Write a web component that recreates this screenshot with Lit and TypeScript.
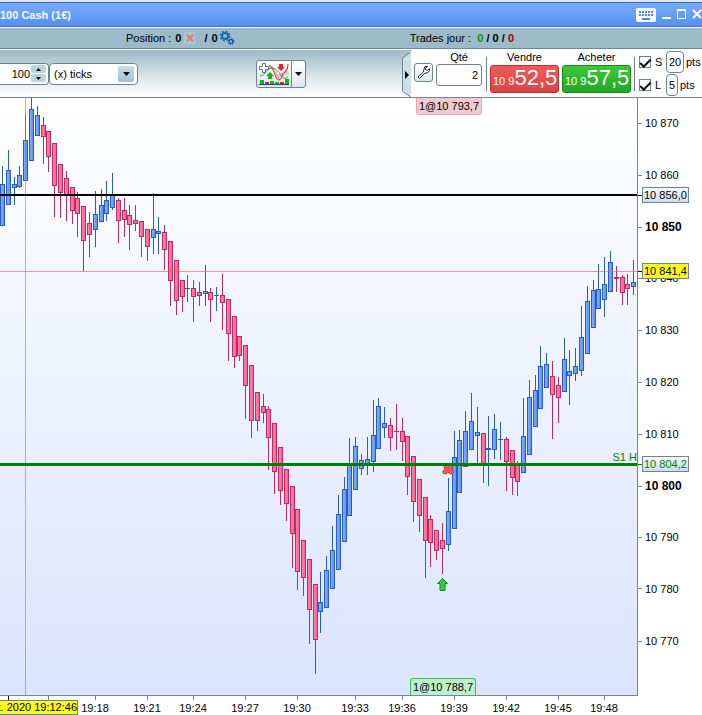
import { LitElement, html, svg, css } from "lit";
import { customElement } from "lit/decorators.js";

// Plot drawing space; it stretches with the window.
const PLOT_W = 637;
const PLOT_H = 597;
const PLOT_TOP = 98;

type Candle = [x: number, high: number, top: number, bottom: number, low: number, kind: "u" | "d"];

const CANDLES: Candle[] = [
  [2, 166, 184, 226, 226, "u"], [8, 150, 170, 205, 205, "u"], [14, 177, 184, 188, 205, "u"],
  [19, 166, 175, 187, 188, "u"], [25, 114, 140, 181, 181, "u"], [31, 98, 109, 161, 161, "u"],
  [37, 106, 115, 136, 136, "u"], [43, 117, 125, 137, 164, "d"], [48, 131, 131, 157, 172, "d"],
  [54, 143, 143, 186, 217, "d"], [60, 164, 164, 193, 218, "d"], [66, 171, 178, 196, 221, "d"],
  [72, 187, 187, 211, 224, "d"], [77, 192, 198, 214, 237, "d"], [83, 206, 206, 241, 271, "d"],
  [89, 212, 223, 235, 257, "d"], [95, 191, 214, 230, 247, "u"], [101, 189, 205, 222, 222, "u"],
  [106, 181, 200, 214, 221, "u"], [112, 173, 195, 208, 210, "u"], [118, 198, 200, 221, 243, "d"],
  [124, 198, 210, 220, 237, "d"], [129, 205, 215, 225, 250, "d"], [135, 205, 220, 224, 231, "d"],
  [141, 221, 221, 237, 257, "d"], [147, 229, 229, 247, 261, "d"], [153, 193, 229, 238, 254, "u"],
  [158, 217, 231, 234, 254, "u"], [164, 225, 232, 250, 270, "d"], [170, 241, 241, 281, 306, "d"],
  [176, 260, 260, 301, 315, "d"], [182, 280, 280, 297, 312, "d"], [187, 275, 288, 289, 302, "d"],
  [193, 280, 288, 297, 322, "d"], [199, 282, 292, 296, 306, "d"], [205, 265, 291, 294, 306, "u"],
  [210, 288, 292, 300, 322, "d"], [216, 287, 295, 296, 311, "u"], [222, 274, 295, 303, 330, "d"],
  [228, 299, 299, 334, 361, "d"], [234, 316, 316, 357, 368, "d"], [239, 336, 336, 356, 361, "d"],
  [245, 345, 345, 386, 419, "d"], [251, 365, 365, 421, 438, "d"], [257, 392, 392, 421, 431, "d"],
  [263, 394, 406, 413, 423, "d"], [268, 406, 409, 438, 470, "d"], [274, 423, 423, 472, 494, "d"],
  [280, 447, 447, 491, 505, "d"], [286, 469, 469, 504, 521, "d"], [292, 486, 486, 534, 568, "d"],
  [297, 509, 509, 572, 590, "d"], [303, 540, 540, 578, 596, "d"], [309, 559, 559, 610, 644, "d"],
  [315, 584, 584, 640, 674, "d"], [320, 572, 602, 612, 633, "u"], [326, 556, 570, 608, 608, "u"],
  [332, 526, 550, 589, 589, "u"], [338, 495, 514, 570, 570, "u"], [344, 477, 489, 542, 542, "u"],
  [349, 438, 465, 516, 516, "u"], [355, 437, 446, 490, 490, "u"], [361, 454, 460, 469, 475, "u"],
  [367, 437, 459, 466, 475, "u"], [373, 400, 435, 462, 472, "u"], [378, 398, 406, 449, 449, "u"],
  [384, 407, 423, 428, 438, "u"], [390, 418, 425, 438, 451, "d"], [396, 404, 431, 432, 450, "d"],
  [402, 418, 431, 442, 461, "d"], [407, 436, 436, 477, 495, "d"], [413, 456, 456, 502, 522, "d"],
  [419, 479, 479, 516, 532, "d"], [425, 497, 497, 541, 578, "d"], [430, 515, 519, 543, 567, "d"],
  [436, 530, 530, 551, 560, "d"], [442, 523, 540, 549, 574, "d"], [448, 478, 511, 545, 551, "u"],
  [454, 431, 457, 529, 529, "u"], [459, 430, 440, 493, 493, "u"], [465, 411, 431, 467, 467, "u"],
  [471, 393, 421, 450, 450, "u"], [477, 407, 432, 436, 464, "u"], [483, 433, 433, 465, 483, "d"],
  [488, 416, 448, 450, 486, "u"], [494, 414, 429, 450, 459, "u"], [500, 422, 439, 440, 460, "u"],
  [506, 437, 439, 462, 491, "d"], [512, 450, 450, 478, 495, "d"], [517, 461, 464, 482, 496, "d"],
  [523, 398, 436, 473, 473, "u"], [529, 380, 397, 455, 455, "u"], [535, 375, 390, 427, 427, "u"],
  [540, 346, 366, 409, 409, "u"], [546, 353, 364, 388, 388, "u"], [552, 361, 376, 395, 439, "d"],
  [558, 377, 385, 398, 423, "d"], [564, 338, 359, 392, 392, "u"], [569, 350, 371, 376, 405, "u"],
  [575, 348, 366, 374, 381, "u"], [581, 306, 337, 371, 376, "u"], [587, 286, 301, 354, 354, "u"],
  [593, 280, 290, 328, 328, "u"], [598, 264, 289, 309, 309, "u"], [604, 257, 284, 300, 317, "u"],
  [610, 251, 262, 292, 292, "u"], [616, 266, 277, 279, 292, "d"], [622, 275, 277, 293, 305, "d"],
  [627, 274, 284, 289, 305, "d"], [633, 260, 282, 287, 295, "u"],
];

const PRICES = [
  { y: 123, t: "10 870" }, { y: 175, t: "10 860" }, { y: 227, t: "10 850", strong: true },
  { y: 278, t: "10 840" }, { y: 330, t: "10 830" }, { y: 382, t: "10 820" },
  { y: 434, t: "10 810" }, { y: 486, t: "10 800", strong: true }, { y: 537, t: "10 790" },
  { y: 589, t: "10 780" }, { y: 641, t: "10 770" },
];

const MARKS = [
  { y: 195, t: "10 856,0", kind: "level" },
  { y: 271, t: "10 841,4", kind: "cursor" },
  { y: 464, t: "10 804,2", kind: "level support" },
];

const TIMES = [
  { x: 48, t: "" }, { x: 95, t: "19:18" }, { x: 147, t: "19:21" }, { x: 193, t: "19:24" },
  { x: 245, t: "19:27" }, { x: 297, t: "19:30" }, { x: 355, t: "19:33" }, { x: 402, t: "19:36" },
  { x: 454, t: "19:39" }, { x: 506, t: "19:42" }, { x: 558, t: "19:45" }, { x: 604, t: "19:48" },
];

const pctY = (y: number) => `top:${((y - PLOT_TOP) / PLOT_H) * 100}%`;
const pctX = (x: number) => `left:${(x / PLOT_W) * 100}%`;

const base = css`
  :host, * { box-sizing: border-box; }
  button, input, select { font: inherit; color: inherit; margin: 0; padding: 0; }
  button { cursor: pointer; }
  svg { display: block; }
`;

@customElement("title-bar")
class TitleBar extends LitElement {
  static styles = [base, css`
    :host {
      display: flex; align-items: center; flex: none; height: 25px; overflow: hidden;
      background: linear-gradient(#77adff, #5590ee);
      border-top: 1px solid #2c63bd; border-bottom: 1px solid #3a70c6;
    }
    .title { flex: 1; margin: 0; font-size: 11px; line-height: 16px; font-weight: bold; color: #f4f8ff; white-space: nowrap; }
    .controls { display: flex; align-items: center; gap: 5px; flex: none; }
    .controls button { border: 0; background: none; width: 10px; height: 16px; }
    .controls .keys { width: 21px; }
  `];
  render() {
    return html`
      <h1 class="title">100 Cash (1€)</h1>
      <div class="controls">
        <button class="keys" aria-label="Clavier">
          <svg width="21" height="16" viewBox="0 0 21 16"><rect x="0" y="1" width="20" height="14" rx="2" fill="#fff"/>
            <path d="M3 5H18M3 8H18" stroke="#4a86e4" stroke-width="2" stroke-dasharray="2 1"/><path d="M6 12H14" stroke="#4a86e4" stroke-width="2"/></svg>
        </button>
        <button aria-label="Réduire"><svg width="10" height="16"><rect y="10" width="9" height="2" fill="#fff"/></svg></button>
        <button aria-label="Agrandir"><svg width="10" height="16"><path d="M.5 2V11.5H8.5V2M0 3H9" fill="none" stroke="#fff"/><rect y="2" width="9" height="2" fill="#fff"/></svg></button>
        <button aria-label="Fermer"><svg width="10" height="16"><path d="M1 3L9 11M9 3L1 11" stroke="#fff" stroke-width="2"/></svg></button>
      </div>`;
  }
}

@customElement("status-bar")
class StatusBar extends LitElement {
  static styles = [base, css`
    :host {
      display: flex; align-items: center; justify-content: space-between; flex: none; height: 22px;
      padding: 0 188px 0 126px; background: #9cbac7; white-space: nowrap; font-size: 11px; line-height: 16px;
      border-top: 1px solid #fff; border-bottom: 1px solid #6f8791;
    }
    .group { display: flex; align-items: center; }
    .count { margin-left: 4px; }
    .slash { margin: 0 4px 0 7px; }
    button { border: 0; background: none; }
    .win { color: #12910f; } .loss { color: #a00010; }
  `];
  render() {
    return html`
      <div class="group"><span>Position :</span><b class="count">0</b>
        <button aria-label="Fermer la position"><svg width="16" height="14" viewBox="0 0 16 14"><rect x="3.5" y="1.5" width="10" height="11" fill="#b5c5cf" stroke="#a9c6d2"/>
          <path d="M5 4l2-1 2 2 2-2 2 1-2 3 2 3-2 1-2-2-2 2-2-1 2-3z" fill="#db8189"/></svg></button>
        <b class="slash">/</b><b>0</b>
        <button aria-label="Réglages"><svg width="18" height="16" viewBox="0 0 18 16" fill="none">
          <circle cx="7" cy="6" r="3" stroke="#1769bd" stroke-width="2"/><circle cx="7" cy="6" r="4.5" stroke="#1769bd" stroke-width="2" stroke-dasharray="1.8 1.73"/>
          <circle cx="13" cy="11.500" r="1.800" stroke="#114fb4" stroke-width="1.200"/><circle cx="13" cy="11.500" r="2.800" stroke="#114fb4" stroke-width="1.300" stroke-dasharray="1.1 1.1"/></svg></button>
      </div>
      <div class="group"><span>Trades jour :&nbsp;</span><span>&nbsp;<b class="win">0</b> <b>/</b> <b>0</b> <b>/</b> <b class="loss">0</b></span></div>`;
  }
}

@customElement("tool-bar")
class ToolBar extends LitElement {
  static styles = [base, css`
    :host {
      display: flex; align-items: center; flex: none; height: 49px; overflow: hidden; font-size: 11px; line-height: 14px;
      background: linear-gradient(#9bb9c6, #dfe8ec 60%, #fff); border-top: 1px solid #fff; border-bottom: 1px solid #728890;
    }
    .field { display: flex; align-items: center; flex: none; height: 22px; background: #fff; border: 1px solid #6d848e; border-radius: 4px; }
    .period { width: 49px; border-left: 0; border-radius: 0 4px 4px 0; padding-right: 2px; }
    .period input { flex: 1; min-width: 0; border: 0; background: none; text-align: right; padding-right: 1px; }
    .steps { display: flex; flex-direction: column; gap: 1px; flex: none; }
    .steps button { display: grid; place-items: center; width: 15px; height: 8px; border: 0; border-radius: 2px; background: #b9d5e0; }
    .unit { display: grid; grid-template-columns: 1fr 19px; width: 89px; }
    .unit select { grid-area: 1 / 1 / 2 / 3; appearance: none; border: 0; background: none; height: 20px; padding-left: 4px; z-index: 1; outline: 0; }
    .drop { grid-area: 1 / 2; width: 16px; height: 16px; border-radius: 2px; background: linear-gradient(#c2dde7, #9fc0ce); display: grid; place-items: center; }
    .indicators { display: flex; flex: none; margin-left: 118px; height: 28px; border: 1px solid #6d848e; border-radius: 3px; overflow: hidden; background: linear-gradient(#fff, #dfe6ea); }
    .indicators button { border: 0; background: none; width: 34px; display: grid; place-items: center; }
    .indicators .more { width: 14px; border-left: 1px solid #6d848e; }
    .orders { display: flex; align-items: center; flex: none; align-self: stretch; width: 300px; margin-left: auto; white-space: nowrap; }
    .fold { border: 0; background: none; width: 9px; height: 46px; flex: none; }
    .panel { display: flex; align-items: flex-end; flex: 1; align-self: stretch; background: #fff; padding: 0 0 4px 3px; min-width: 0; }
    .wrench { width: 19px; height: 19px; margin: 0 3px 11px 0; border: 1px solid #6d848e; border-radius: 3px; background: linear-gradient(#fff, #dde6ea); display: grid; place-items: center; flex: none; }
    .qty { display: flex; flex-direction: column; align-items: center; flex: none; margin-bottom: 7px; }
    .qty input { width: 46px; height: 22px; text-align: right; padding-right: 3px; border: 1px solid #6d848e; border-radius: 3px; }
    .rule { width: 1px; height: 34px; background: #6d848e; flex: none; margin: 0 3px 2px; align-self: flex-end; }
    .qty + .rule { margin-left: 4px; }
    .side { display: flex; flex-direction: column; align-items: center; flex: none; gap: 1px; }
    .deal { width: 69px; height: 28px; color: #fff; border-radius: 3px; padding: 0 2px; text-align: right; line-height: 24px; overflow: hidden; }
    .deal b { font-size: 22px; font-weight: normal; }
    .sell { background: linear-gradient(#ee5a5a, #dc4444); border: 1px solid #b52f34; }
    .buy { background: linear-gradient(#3cc83c, #23a823); border: 1px solid #168a18; }
    .sell-side { margin-right: 3px; }
    .stops { display: flex; flex-direction: column; align-self: stretch; flex: none; padding-left: 1px; }
    .stop { display: flex; align-items: center; height: 23px; flex: none; }
    .stop input[type="checkbox"] { appearance: none; width: 12px; height: 12px; border: 1px solid #6d848e; background: #fff; flex: none; display: grid; place-items: center; }
    .stop input[type="checkbox"]:checked::before { content: ""; width: 9px; height: 4px; border: solid #111; border-width: 0 0 2px 2px; transform: rotate(-45deg); }
    .stop label { width: 15px; padding-left: 4px; }
    .stop .pts { height: 22px; border: 1px solid #6d848e; border-radius: 4px; text-align: center; background: #fff; margin-right: 2px; }
    .wide { width: 18px; } .slim { width: 12px; }
  `];
  render() {
    return html`
      <div class="field period"><input aria-label="Période" value="100">
        <span class="steps">
          <button aria-label="Plus"><svg width="5" height="3"><path d="M0 3L2.500 0L5 3z"/></svg></button>
          <button aria-label="Moins"><svg width="5" height="3"><path d="M0 0L2.500 3L5 0z"/></svg></button>
        </span></div>
      <div class="field unit"><select aria-label="Unité"><option>(x) ticks</option></select>
        <span class="drop"><svg width="7" height="4"><path d="M0 0H7L3.500 4z"/></svg></span></div>
      <div class="indicators">
        <button aria-label="Indicateurs"><svg width="32" height="26" viewBox="0 0 32 26" fill="none">
          <path d="M1 14C5 14 8 6 12 5C16 4 20 16 24 17C28 16 30 10 31 9V14C28 19 22 19 19 14C16 9 12 7 9 9L3 15z" fill="#c9e8c6"/>
          <path d="M12 6C17 4 17 20 21 19C25 18 25 14 30 12V3C28 11 24 12 21 13C18 14 15 3 12 4z" fill="#f2b9bb"/>
          <path d="M2 15C6 15 6 12 11 8C16 5 20 10 24 15C26 18 28 18 30 16" stroke="#35a735"/>
          <path d="M11 5C16 4 17 20 21 19C25 18 23 13 27 11C29 9 30 6 30 3" stroke="#d8252d"/>
          <path d="M4.500 2.500h3v3h3v3h-3v3h-3v-3h-3v-3h3z" fill="#fff" stroke="#5c747f"/>
          <path d="M12 11L16 15H14V18H10V15H8z" fill="#18b21e"/><path d="M23 10L19 6H21V3H25V6H27z" fill="#e5202a"/>
          <path d="M2 19h4v4H2zM12 20h4v3H12zM17 21h4v2H17zM27 18h4v5H27z" fill="#12b518"/><path d="M7 21h4v2H7zM22 21h4v2H22z" fill="#d9202a"/><path d="M1 23.500H31" stroke="#203a9c"/></svg></button>
        <button class="more" aria-label="Liste"><svg width="7" height="4"><path d="M0 0H7L3.500 4z"/></svg></button>
      </div>
      <div class="orders">
        <button class="fold" aria-label="Replier"><svg width="9" height="46" viewBox="0 0 9 46"><path d="M9 0V46H8L.5 39V8L8 1.500z" fill="#cfdfe6"/><path d="M5 0H9V46H5L9 46V1z" fill="#e6eef1"/><path d="M8.500 1L.5 7V40L8.500 46" fill="none" stroke="#6d848e"/><path d="M3 20L7 24L3 28z"/></svg></button>
        <div class="panel">
          <button class="wrench" aria-label="Options"><svg width="15" height="15" viewBox="0 0 15 15"><path d="M9 1.500L8 4L7.500 7L2 12L3.500 13.500L8.500 8.500L12 7.500L13.500 5.500V3.500L11.500 5.500L9.500 4.500V3L11.500 1.500z" fill="#fff" stroke="#222" stroke-linejoin="round"/></svg></button>
          <div class="qty"><label for="qty">Qté</label><input id="qty" value="2"></div>
          <span class="rule"></span>
          <div class="side sell-side"><span>Vendre</span><button class="deal sell">10 9<b>52,5</b></button></div>
          <div class="side"><span>Acheter</span><button class="deal buy">10 9<b>57,5</b></button></div>
          <span class="rule"></span>
          <div class="stops">
            <div class="stop"><input id="s" type="checkbox" checked><label for="s">S</label><input class="pts wide" aria-label="Stop" value="20"><span>pts</span></div>
            <div class="stop"><input id="l" type="checkbox" checked><label for="l">L</label><input class="pts slim" aria-label="Limite" value="5"><span>pts</span></div>
          </div>
        </div>
      </div>`;
  }
}

@customElement("price-chart")
class PriceChart extends LitElement {
  static styles = [base, css`
    :host {
      display: grid; flex: 1; min-height: 300px; grid-template-columns: minmax(0, 1fr) 64px; grid-template-rows: minmax(0, 1fr) 19px;
      background: #fff; font-size: 11px; line-height: 14px; white-space: nowrap; overflow: hidden;
    }
    .plot { position: relative; border-right: 1px solid #738792; border-bottom: 1px solid #738792; background: linear-gradient(#fff, #dae4fe); }
    .canvas { position: absolute; width: 100%; height: 100%; shape-rendering: crispEdges; }
    .up { fill: url(#blue); stroke: #285cc2; } .down { fill: url(#pink); stroke: #c02a61; }
    .wu { fill: #285cc2; } .wd { fill: #c02a61; }
    .hair { fill: #ff5050; fill-opacity: 0.6; }
    .smooth { shape-rendering: auto; }
    .order { position: absolute; width: 66px; height: 17px; line-height: 17px; text-align: center; }
    .sold { top: 0; background: #f1c9d2; border: 1px solid #f6a5ae; border-top: 0; border-radius: 0 0 3px 3px; }
    .bought { bottom: 0; background: #c0edcc; border: 1px solid #3dc24b; border-bottom: 0; border-radius: 3px 3px 0 0; }
    .name { position: absolute; right: 0; color: #008000; transform: translateY(-100%); }
    .prices { position: relative; margin-bottom: 1px; }
    .price { position: absolute; left: 0; display: flex; align-items: center; transform: translateY(-50%); }
    .price::before { content: ""; width: 4px; height: 1px; background: #738792; margin-right: 3px; }
    .strong { font-weight: bold; font-size: 12px; }
    .mark::before { margin-right: 0; background: #111; }
    .mark span { height: 16px; border: 1px solid #6d848e; padding: 0 1px; }
    .level span { background: linear-gradient(#f4f8ff, #cfdcee); }
    .cursor span { background: #fffb16; }
    .support { color: #008000; } .support::before { background: #008000; }
    .times { position: relative; margin-right: 1px; }
    .time { position: absolute; top: 0; width: 40px; margin-left: -20px; text-align: center; padding-top: 5px; }
    .time::before { content: ""; position: absolute; top: 0; left: 20px; width: 1px; height: 4px; background: #738792; }
    .now::before { background: #111; }
    .stamp { position: absolute; left: 0; top: 4px; width: 78px; height: 15px; line-height: 13px; display: flex; justify-content: flex-end; overflow: hidden; background: #fffb16; border: 1px solid #6d848e; border-left: 0; }
  `];
  candle([x, high, top, bottom, low, kind]: Candle) {
    const up = kind === "u";
    const h = bottom - top;
    return svg`<rect class=${up ? "wu" : "wd"} x=${x} y=${high} width="1" height=${low - high}/>
      ${h < 3
        ? svg`<rect class=${up ? "wu" : "wd"} x=${x - 2} y=${top} width="5" height=${h}/>`
        : svg`<rect class=${up ? "up" : "down"} x=${x - 1.5} y=${top + 0.5} width="4" height=${h - 1}/>`}`;
  }
  render() {
    return html`
      <div class="plot">
        <svg class="canvas" viewBox="0 ${PLOT_TOP} ${PLOT_W} ${PLOT_H}" preserveAspectRatio="none">
          <defs>
            <linearGradient id="blue"><stop stop-color="#86b4ff"/><stop offset="1" stop-color="#568cf0"/></linearGradient>
            <linearGradient id="pink"><stop stop-color="#ff85ad"/><stop offset="1" stop-color="#f95e90"/></linearGradient>
          </defs>
          ${CANDLES.map((c) => this.candle(c))}
          <path class="smooth" d="M443.500 465l2-1.500 3 2 3-2 2.500 1.500-2 4 2 3-2 2h-2l-2-2-2 2h-2l-1.500-2 2-3z" fill="#ee5656" stroke="#b92e2e" stroke-dasharray="2 1"/>
          <path class="smooth" d="M442.500 578.500L447.500 583.500H445V590.500H440V583.500H437.500z" fill="#38cc3c" stroke="#098a12"/>
          <rect class="hair" x="25" y="98" width="1" height="597"/>
          <rect class="hair" x="0" y="271" width="637" height="1"/>
          <rect x="0" y="194" width="637" height="2"/>
          <rect x="0" y="463" width="637" height="3" fill="#008000"/>
        </svg>
        <span class="name" style=${pctY(464)}>S1 H</span>
        <span class="order sold" style=${pctX(416)}>1@10 793,7</span>
        <span class="order bought" style=${pctX(410)}>1@10 788,7</span>
      </div>
      <div class="prices">
        ${PRICES.map((p) => html`<span class="price ${p.strong ? "strong" : ""}" style=${pctY(p.y)}>${p.t}</span>`)}
        ${MARKS.map((m) => html`<span class="price mark ${m.kind}" style=${pctY(m.y)}><span>${m.t}</span></span>`)}
      </div>
      <div class="times">
        <span class="time now" style=${pctX(8)}></span>
        ${TIMES.map((t) => html`<span class="time" style=${pctX(t.x)}>${t.t}</span>`)}
        <span class="stamp">t. 2020 19:12:46</span>
      </div>`;
  }
}

@customElement("app-root")
class AppRoot extends LitElement {
  static styles = css`
    :host { display: flex; flex-direction: column; min-height: 100vh; background: #fff; color: #000; font-family: "Liberation Sans", Arial, sans-serif; }
    .edge { flex: none; height: 2px; background: #e6e6e8; }
  `;
  render() {
    return html`<div class="edge"></div><title-bar></title-bar><status-bar></status-bar><tool-bar></tool-bar><price-chart></price-chart>`;
  }
}
